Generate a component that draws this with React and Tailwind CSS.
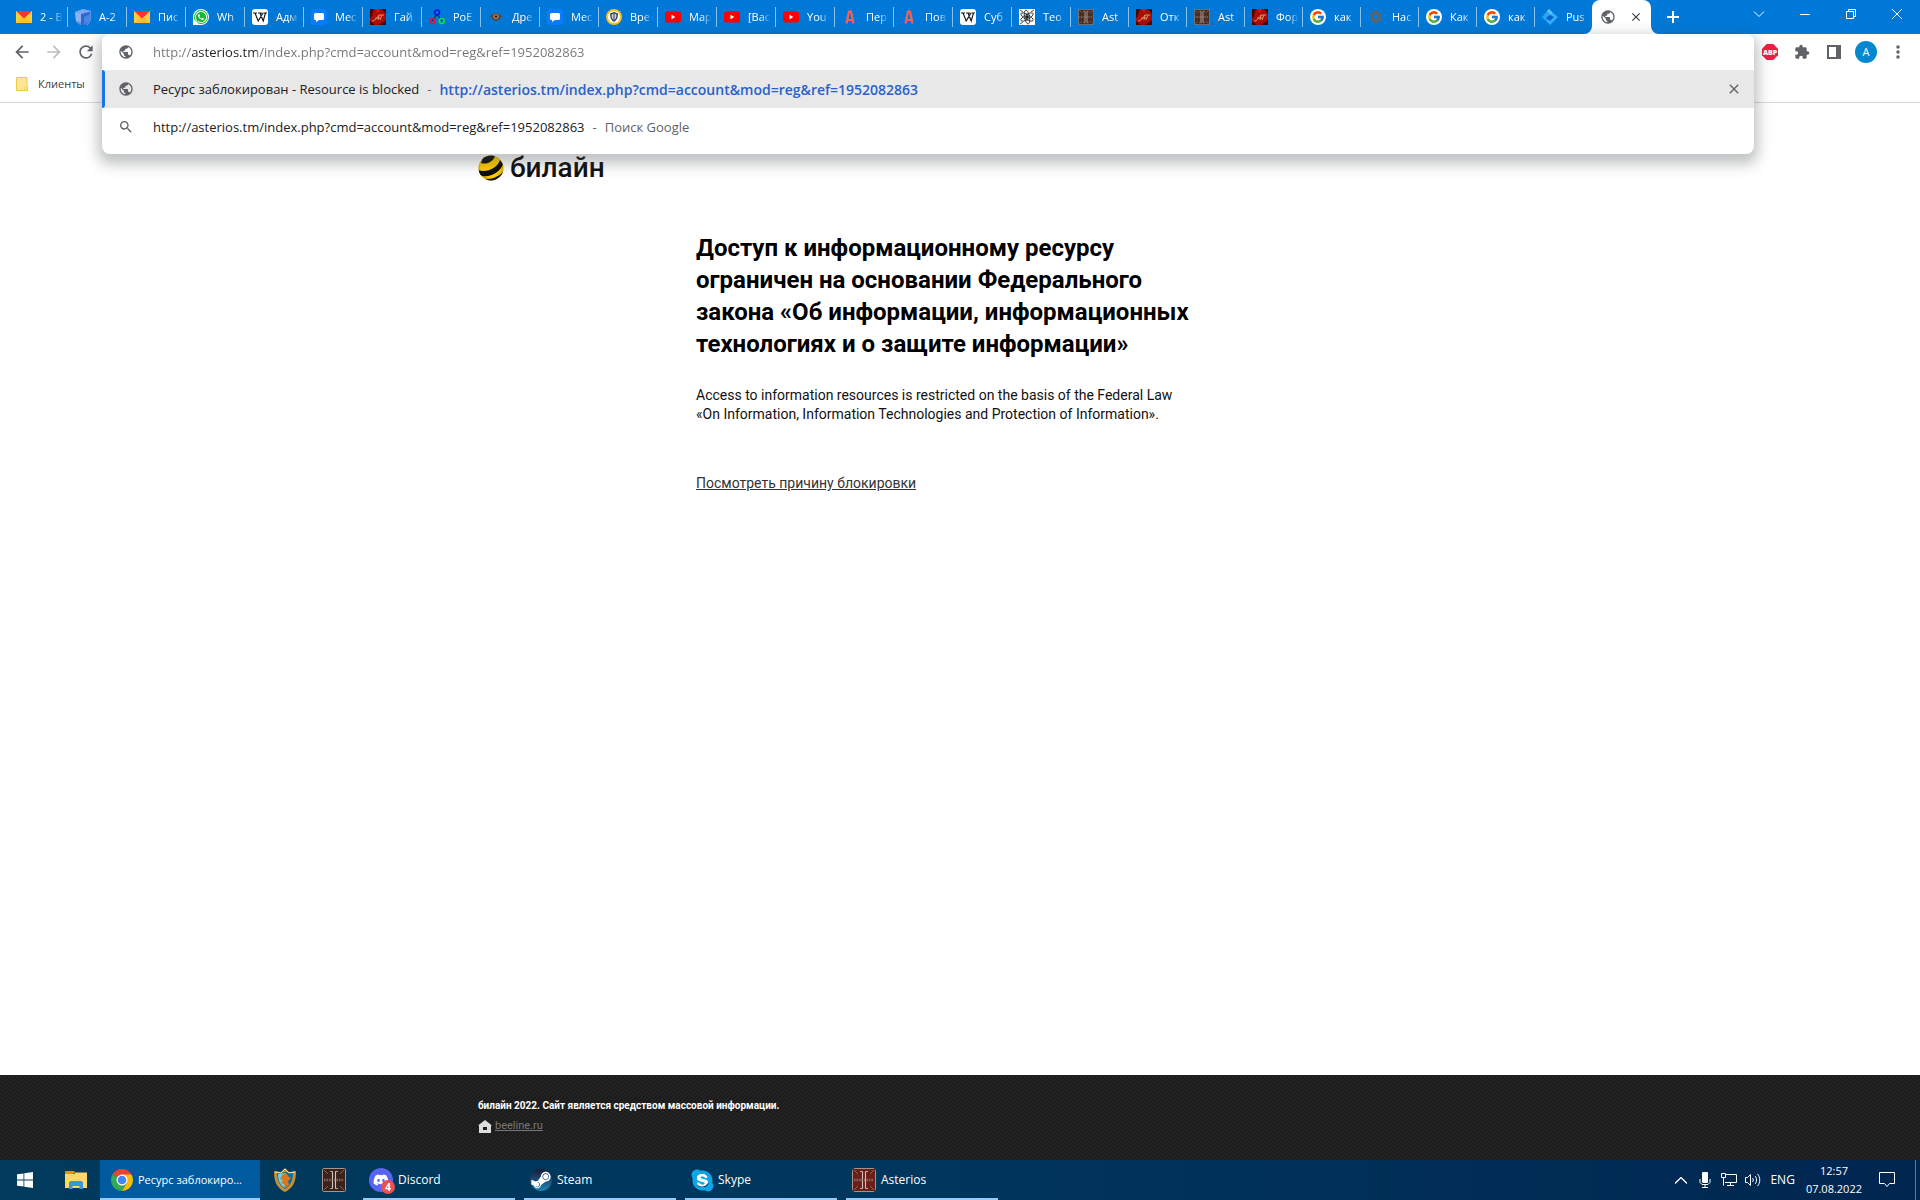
import {
  MdArrowBack,
  MdArrowForward,
  MdClose,
  MdExtension,
  MdMoreVert,
  MdPublic,
  MdRefresh,
  MdSearch,
  MdSettings,
} from 'react-icons/md'
import { FcGoogle } from 'react-icons/fc'
import { FaDiscord, FaSkype, FaSteamSymbol, FaWhatsapp } from 'react-icons/fa'

const URL_TEXT = 'http://asterios.tm/index.php?cmd=account&mod=reg&ref=1952082863'

// ---- favicons, all drawn on a 16px grid ----

function Mail() {
  return (
    <svg viewBox="0 0 16 16" className="size-4">
      <path d="M0 2h16v12H0z" fill="#ffcc3f" />
      <path d="M0 14l6-6h4l6 6z" fill="#ffbe2e" />
      <path d="M0 2h16L8 9.500z" fill="#f33" />
    </svg>
  )
}

function Cube() {
  return (
    <svg viewBox="0 0 16 16" className="size-4">
      <path d="M0 3l8-3 8 2v9l-3 5H5l-4-3z" fill="#5b93ea" />
      <path d="M0 3l6 1v9l-5-1z" fill="#8db4f2" />
      <path d="M6 5l9-2-1 10-3 3H6z" fill="#2f66d0" />
      <path d="M9 8l6-3-1 8-5 3z" fill="#4a84e4" />
      <path d="M0 3l8-3 8 2-10 3z" fill="#79a8f0" />
    </svg>
  )
}

function WhatsApp() {
  return (
    <span className="flex size-4 items-center justify-center rounded-full rounded-bl-sm bg-white">
      <span className="flex size-3.5 items-center justify-center rounded-full bg-[#12b932]">
        <FaWhatsapp className="size-3.5 text-white" />
      </span>
    </span>
  )
}

function Wiki() {
  return (
    <svg viewBox="0 0 16 16" className="size-4">
      <rect width="16" height="16" rx="3" fill="#fff" />
      <path d="M1 4h4M6 4h4M11.500 4H15M3 4l3.200 8L11 4M8 4l3.200 8L13.500 4" stroke="#111" strokeWidth="1.100" fill="none" />
    </svg>
  )
}

function Chat() {
  return (
    <svg viewBox="0 0 16 16" className="size-4">
      <rect width="16" height="16" rx="3" fill="#0a7cff" />
      <path d="M4.500 4h7A1.500 1.500 0 0 1 13 5.500v4a1.500 1.500 0 0 1-1.500 1.500H8l-3 2v-2h-.500A1.500 1.500 0 0 1 3 9.500v-4A1.500 1.500 0 0 1 4.500 4z" fill="#fff" />
    </svg>
  )
}

function RedGame() {
  return (
    <svg viewBox="0 0 16 16" className="size-4">
      <path d="M0 0h16v16H0z" fill="#a80c0c" />
      <path d="M0 0h4L1 9H0zM12 0h4v5zM9 16l7-5v5zM0 12l5 4H0z" fill="#4d0505" />
      <path d="M5 0l3 4 2-4z" fill="#d21a1a" />
      <path d="M2 12c3 0 5-3 7-6h5M9 6l-1 5M5 9h6M12 6l-2 5" stroke="#d9955f" strokeWidth="1" fill="none" />
    </svg>
  )
}

function Rings() {
  return (
    <svg viewBox="0 0 16 16" className="size-4" fill="none" strokeWidth="1.700">
      <path d="M8 5L3 12M8 5l5 7" stroke="#113" strokeWidth="1" />
      <circle cx="8" cy="3.500" r="2.500" stroke="#0b12e8" />
      <circle cx="3.200" cy="12" r="2.500" stroke="#e8103a" />
      <circle cx="12.800" cy="12" r="2.500" stroke="#0be03c" />
    </svg>
  )
}

function Eye() {
  return (
    <svg viewBox="0 0 16 16" className="size-4">
      <path d="M1.500 7.500C4 6 5 4 8 4s4 2 6.500 3.500C12 9 11 12 8 12S4 9 1.500 7.500z" fill="#5b4a3c" />
      <circle cx="8" cy="7.500" r="2.500" fill="#a88768" />
      <circle cx="8" cy="7.500" r="1.200" fill="#1f1a16" />
    </svg>
  )
}

function Guard() {
  return (
    <svg viewBox="0 0 16 16" className="size-4">
      <circle cx="8" cy="8" r="8" fill="#fbc21a" />
      <circle cx="8" cy="8" r="6" fill="#fff" />
      <path d="M8 3l4 1.500c0 4-1 6.500-4 8.500-3-2-4-4.500-4-8.500z" fill="#2e3f5c" />
      <path d="M8 4.500l2.500 1c0 3-.700 4.500-2.500 6-1.800-1.500-2.500-3-2.500-6z" fill="#cfd6e0" />
      <path d="M8 4.500v7" stroke="#2e3f5c" strokeWidth="1" />
    </svg>
  )
}

function YouTube() {
  return (
    <svg viewBox="0 0 16 16" className="size-4">
      <rect y="2.500" width="16" height="11" rx="2.500" fill="#f00" />
      <path d="M6.500 5.800v4.400L10.300 8z" fill="#fff" />
    </svg>
  )
}

function Coral() {
  return (
    <svg viewBox="0 0 16 16" className="size-4">
      <path d="M4.500 14.500L7 2.500h2l2.500 12M5.500 11h5" stroke="#ff5c57" strokeWidth="2.200" fill="none" />
    </svg>
  )
}

function Atom() {
  return (
    <svg viewBox="0 0 16 16" className="size-4" fill="none" stroke="#222" strokeWidth=".800">
      <path d="M0 0h16v16H0z" fill="#fff" stroke="none" />
      <ellipse cx="8" cy="8" rx="7" ry="2.500" transform="rotate(30 8 8)" />
      <ellipse cx="8" cy="8" rx="7" ry="2.500" transform="rotate(-30 8 8)" />
      <ellipse cx="8" cy="8" rx="7" ry="2.500" transform="rotate(80 8 8)" />
      <circle cx="8" cy="8" r="1.500" fill="#222" />
      <path d="M1 1l3 2M15 1l-3 2M1 15l3-2" />
    </svg>
  )
}

function Pillars({ className = 'size-4', fill = '#4a2e24' }) {
  return (
    <svg viewBox="0 0 24 24" className={className}>
      <rect x=".500" y=".500" width="23" height="23" rx="1" fill={fill} stroke="#a5958a" />
      <path d="M2 2l4 4M22 2l-4 4M2 22l4-4M22 22l-4-4" stroke="#8f7a6d" strokeWidth=".800" />
      <path d="M10.500 4v16M13.500 4v16" stroke="#cfc3ba" strokeWidth="1.100" />
      <path d="M8 3.500h3M13 3.500h3M8 20.500h3M13 20.500h3" stroke="#cfc3ba" strokeWidth=".800" />
      <path d="M2 12h20" stroke="#a89488" strokeWidth="2.500" strokeDasharray="1.500 1" opacity=".6" />
    </svg>
  )
}

function Google() {
  return (
    <span className="flex size-4 items-center justify-center rounded-full bg-white">
      <FcGoogle className="size-3.5" />
    </span>
  )
}

function Gear() {
  return <MdSettings className="size-4 text-[#5f6368]" />
}

function Diamonds() {
  return (
    <svg viewBox="0 0 16 16" className="size-4">
      <path d="M0 8l7-8 4 4-7 8z" fill="#2ba6f7" />
      <path d="M7 0l4 4-2 2-4-4z" fill="#5cc3ff" />
      <path d="M8 6l3-2 5 4-8 8-4-4 4-3z" fill="#34b0fb" />
      <path d="M8 6l4 2-4 4-4-3z" fill="#0b62c8" />
    </svg>
  )
}

const tabs = [
  ['2 - В', Mail],
  ['A-2', Cube],
  ['Пис', Mail],
  ['Wh', WhatsApp],
  ['Адм', Wiki],
  ['Мес', Chat],
  ['Гай', RedGame],
  ['PoE', Rings],
  ['Дре', Eye],
  ['Мес', Chat],
  ['Вре', Guard],
  ['Мар', YouTube],
  ['[Вас', YouTube],
  ['You', YouTube],
  ['Пер', Coral],
  ['Пов', Coral],
  ['Суб', Wiki],
  ['Тео', Atom],
  ['Ast', Pillars],
  ['Отк', RedGame],
  ['Ast', Pillars],
  ['Фор', RedGame],
  ['как', Google],
  ['Нас', Gear],
  ['Как', Google],
  ['как', Google],
  ['Pus', Diamonds],
]

function Tab({ title, icon: Icon, wide, first }) {
  return (
    <button className={`flex h-full items-center ${wide ? 'w-[59px]' : 'w-[58px]'}`}>
      <span className={`h-5 w-px ${first ? '' : 'bg-[#8cc2ee]'}`} />
      <span className="flex flex-1 items-center gap-2 pl-[7px]">
        <Icon />
        <span className="w-[23px] overflow-hidden whitespace-nowrap text-left text-[11px] text-white [mask-image:linear-gradient(to_right,black_55%,transparent)]">
          {title}
        </span>
      </span>
    </button>
  )
}

function WindowButton({ label, children }) {
  return (
    <button aria-label={label} className="flex h-7 w-[46px] items-center justify-center">
      <svg viewBox="0 0 10 10" className="size-2.5 overflow-visible" fill="none" stroke="#fff">{children}</svg>
    </button>
  )
}

function TabStrip() {
  return (
    <div className="flex h-[34px] items-stretch bg-[#0078d7] pl-2">
      {tabs.map(([title, icon], i) => (
        <Tab key={i} title={title} icon={icon} wide={i < 18} first={i === 0} />
      ))}
      <div className="relative flex w-[59px] items-center justify-between rounded-t-lg bg-white px-2">
        <MdPublic className="size-4 text-[#5f6368]" />
        <button aria-label="Закрыть вкладку"><MdClose className="size-3.5 text-[#3c4043]" /></button>
        <svg viewBox="0 0 8 8" className="absolute -left-2 bottom-0 size-2"><path d="M8 0v8H0a8 8 0 0 0 8-8z" fill="#fff" /></svg>
        <svg viewBox="0 0 8 8" className="absolute -right-2 bottom-0 size-2"><path d="M0 0v8h8a8 8 0 0 1-8-8z" fill="#fff" /></svg>
      </div>
      <button aria-label="Новая вкладка" className="flex w-11 items-center justify-center">
        <svg viewBox="0 0 12 12" className="size-3"><path d="M6 0v12M0 6h12" stroke="#fff" strokeWidth="2" /></svg>
      </button>
      <div className="ml-auto flex">
        <WindowButton label="Поиск вкладок"><path d="M0 2.500l5 5 5-5" /></WindowButton>
        <WindowButton label="Свернуть"><path d="M0 5.500h10" /></WindowButton>
        <WindowButton label="Восстановить"><path d="M.5 2.500h7v7h-7zM2.500 2.500v-2h7v7h-2" /></WindowButton>
        <WindowButton label="Закрыть"><path d="M0 0l10 10M10 0L0 10" /></WindowButton>
      </div>
    </div>
  )
}

function ToolButton({ label, children }) {
  return (
    <button aria-label={label} className="flex h-9 w-8 items-center justify-center text-[#5f6368]">
      {children}
    </button>
  )
}

// address field with its suggestion list, hangs over the page
function Omnibox() {
  return (
    <div className="absolute inset-x-0 top-0 z-10 overflow-hidden rounded-lg bg-white pb-2 text-[13px] text-[#202124] shadow-[0_6px_14px_4px_rgba(60,64,67,0.32)]">
      <div className="flex h-9 items-center pl-4">
        <MdPublic className="size-4 text-[#5f6368]" />
        <input
          aria-label="Адресная строка"
          defaultValue={URL_TEXT}
          className="ml-[19px] flex-1 bg-[linear-gradient(to_right,#757575_38px,#202124_38px,#202124_104px,#757575_104px)] bg-clip-text pt-0.5 text-transparent outline-none"
        />
      </div>
      <div className="flex h-[38px] items-center bg-[#e8e8e8]">
        <span className="h-full w-[3px] rounded-r-sm bg-[#1a73e8]" />
        <MdPublic className="ml-[13px] size-4 text-[#5f6368]" />
        <a href="#blocked" className="ml-[19px] flex flex-1 items-center whitespace-nowrap pt-0.5">
          Ресурс заблокирован - Resource is blocked
          <span className="mx-2 text-[#5f6368]">-</span>
          <span className="text-sm font-semibold text-[#2962c8]">{URL_TEXT}</span>
        </a>
        <button aria-label="Удалить подсказку" className="pr-3">
          <MdClose className="size-4 text-[#5f6368]" />
        </button>
      </div>
      <div className="flex h-[38px] items-center pl-4">
        <MdSearch className="size-4 text-[#5f6368]" />
        <a href="#search" className="ml-[19px] whitespace-nowrap pt-0.5">
          {URL_TEXT}
          <span className="mx-2 text-[#5f6368]">-</span>
          <span className="text-[#5f6368]">Поиск Google</span>
        </a>
      </div>
    </div>
  )
}

function Toolbar() {
  return (
    <header className="h-[69px] border-b border-[#d6d8db] bg-white">
      <div className="flex px-1.5">
        <ToolButton label="Назад"><MdArrowBack className="size-5" /></ToolButton>
        <ToolButton label="Вперёд"><MdArrowForward className="size-5 text-[#babcbe]" /></ToolButton>
        <ToolButton label="Обновить"><MdRefresh className="size-5" /></ToolButton>
        <div className="relative flex-1"><Omnibox /></div>
        <ToolButton label="Adblock Plus">
          <svg viewBox="0 0 16 16" className="size-4">
            <path d="M4.700 0h6.600L16 4.700v6.600L11.300 16H4.700L0 11.300V4.700z" fill="#ed1e45" />
            <text x="8" y="10.500" textAnchor="middle" fontSize="7" fontWeight="800" fill="#fff">ABP</text>
          </svg>
        </ToolButton>
        <ToolButton label="Расширения"><MdExtension className="size-4" /></ToolButton>
        <ToolButton label="Боковая панель">
          <svg viewBox="0 0 14 14" className="size-3.5"><path d="M0 0h14v14H0zM2 2v10h7V2z" fillRule="evenodd" fill="#5f6368" /></svg>
        </ToolButton>
        <ToolButton label="Профиль">
          <span className="flex size-[22px] items-center justify-center rounded-full bg-[#0288d1] text-[11px] text-white">А</span>
        </ToolButton>
        <ToolButton label="Меню"><MdMoreVert className="size-5" /></ToolButton>
      </div>
      <a href="#clients" className="flex h-7 w-24 items-center gap-2.5 pl-4 text-[11px] text-[#3c4043]">
        <svg viewBox="0 0 12 14" className="h-3.5 w-3">
          <path d="M.5.5h10.500v9h.500v4H.5z" fill="#ffe694" stroke="#ecc94b" />
          <path d="M9 10v3.500" stroke="#ecc94b" />
        </svg>
        Клиенты
      </a>
    </header>
  )
}

function BeelineLogo() {
  return (
    <div className="flex h-[26px] items-center gap-1.5">
      <svg viewBox="0 0 26 26" className="size-[26px]">
        <defs>
          <clipPath id="ball"><circle cx="13" cy="13" r="12.500" /></clipPath>
          <radialGradient id="shade" cx=".5" cy=".45" r=".55">
            <stop offset=".7" stopColor="#000" stopOpacity="0" />
            <stop offset="1" stopColor="#000" stopOpacity=".3" />
          </radialGradient>
        </defs>
        <g clipPath="url(#ball)">
          <path d="M0 0h26v26H0z" fill="#fc0" />
          <path d="M3 8c5 2 12-1 14-7L13-1 5 2z" fill="#111" />
          <path d="M0 15c8 3 19-1 22-10l3 4c-2 8-15 15-23 11z" fill="#0a0a0a" />
          <path d="M6 24c8 1 17-3 20-9v4c-4 5-10 8-17 7z" fill="#151515" />
          <path d="M0 0h26v26H0z" fill="url(#shade)" />
        </g>
      </svg>
      <span className="text-[28px] font-medium leading-[26px] text-[#111]">билайн</span>
    </div>
  )
}

function Page() {
  return (
    <main className="flex-1 bg-white font-[Roboto,sans-serif]">
      <div className="mx-auto w-full max-w-[964px] pt-[52px]">
        <BeelineLogo />
        <div className="ml-[218px] mt-[51px] max-w-[510px]">
          <h1 className="text-2xl font-bold leading-8 text-black">
            Доступ к информационному ресурсу<br />
            ограничен на основании Федерального<br />
            закона «Об информации, информационных<br />
            технологиях и о защите информации»
          </h1>
          <p className="mt-[26px] text-sm leading-[19px] text-[#111]">
            Access to information resources is restricted on the basis of the Federal Law<br />
            «On Information, Information Technologies and Protection of Information».
          </p>
          <a href="#reason" className="mt-[49px] inline-block text-sm leading-5 text-[#333] underline">
            Посмотреть причину блокировки
          </a>
        </div>
      </div>
    </main>
  )
}

function Footer() {
  return (
    <footer className="bg-[#242424] bg-[linear-gradient(135deg,#1a1a1a_25%,transparent_25%,transparent_50%,#1a1a1a_50%,#1a1a1a_75%,transparent_75%)] bg-[length:4px_4px] pb-[25px] pt-[23px] font-[Roboto,sans-serif] text-[10px]">
      <div className="mx-auto flex max-w-[964px] flex-col gap-1">
        <p className="font-bold leading-4 text-white">билайн 2022. Сайт является средством массовой информации.</p>
        <a href="#beeline" className="flex h-[17px] items-center gap-[3px] text-[11px] text-[#777]">
          <svg viewBox="0 0 14 13" className="h-[13px] w-3.5">
            <path d="M7 0l7 5.500h-1V13H1V5.500H0zM5 7v3h4V7z" fillRule="evenodd" fill="#ddd" />
          </svg>
          <span className="underline">beeline.ru</span>
        </a>
      </div>
    </footer>
  )
}

function TaskIcon({ label, children }) {
  return <button aria-label={label} className="flex w-[49px] items-center justify-center">{children}</button>
}

function TaskButton({ label, active, children }) {
  return (
    <button
      className={`flex items-center gap-[5px] border-b-2 border-[#99c9f7] pt-0.5 text-white ${
        active ? 'w-40 bg-[#005a9e] pl-[11px] text-[11px]' : 'mr-[9px] w-[152px] pl-1.5 text-xs'
      }`}
    >
      {children}
      <span className="whitespace-nowrap">{label}</span>
    </button>
  )
}

function Taskbar() {
  return (
    <nav className="flex h-10 items-stretch bg-linear-to-r from-[#003a5d] via-[#00365c] to-[#002650]">
      <TaskIcon label="Пуск">
        <svg viewBox="0 0 16 16" className="size-4" fill="#fff">
          <path d="M0 2.300l6.500-.900v6.100H0zM7.300 1.300L16 0v7.500H7.300zM0 8.400h6.500v6.200L0 13.700zM7.300 8.400H16V16l-8.700-1.300z" />
        </svg>
      </TaskIcon>
      <div className="flex w-[51px] pl-0.5">
        <TaskIcon label="Проводник">
          <svg viewBox="0 0 22 18" className="h-[18px] w-[22px]">
            <path d="M0 0h9l2 2h-2l-2 2H0z" fill="#d99a0b" />
            <path d="M0 3h9l2-1.500h11V17H0z" fill="#ffd869" />
            <path d="M4 18v-6a2 2 0 0 1 2-2h10a2 2 0 0 1 2 2v6h-3.500v-3h-7v3z" fill="#3a94e0" />
          </svg>
        </TaskIcon>
      </div>
      <TaskButton label="Ресурс заблокиро..." active>
        <svg viewBox="0 0 22 22" className="size-[22px]">
          <path d="M11 11L1.500 5.500A11 11 0 0 1 20.500 5.500z" fill="#ea4335" />
          <path d="M11 11L1.500 5.500A11 11 0 0 0 11 22l4.500-8.500z" fill="#34a853" />
          <path d="M11 5.500h9.500A11 11 0 0 1 11 22l4.800-8.300z" fill="#fbbc05" />
          <circle cx="11" cy="11" r="5.500" fill="#fff" />
          <circle cx="11" cy="11" r="4.300" fill="#4285f4" />
        </svg>
      </TaskButton>
      <TaskIcon label="Щит">
        <svg viewBox="0 0 22 24" className="h-6 w-[22px]">
          <path d="M0 3l7 1 4-4 4 4 7-1c0 11-3 17-11 21C3 20 0 14 0 3z" fill="#c98f35" />
          <path d="M3 5l8-1 8 1c0 8-3 13-8 16-5-3-8-8-8-16z" fill="#0f6f96" />
          <path d="M4 6l7-1v15c-5-3-7-7-7-14z" fill="#6fd0e0" />
          <path d="M8 7l4-2 3 4 2 1-3 3 1 4-4 3-1-4-3-1 2-3-3-1z" fill="#d9771f" />
          <path d="M1 4l6 1 4-4 4 4 6-1" stroke="#ffe9a8" fill="none" />
        </svg>
      </TaskIcon>
      <TaskIcon label="Lineage II"><Pillars className="size-6" fill="#3b231b" /></TaskIcon>
      <div className="ml-[5px] flex">
        <TaskButton label="Discord">
          <span className="relative flex size-6 items-center justify-center rounded-full bg-[#5865f2]">
            <FaDiscord className="size-4 text-white" />
            <span className="absolute -bottom-0.5 -right-0.5 flex size-3.5 items-center justify-center rounded-full bg-[#ed4e50] text-[10px] font-bold leading-none">4</span>
          </span>
        </TaskButton>
        <TaskButton label="Steam">
          <span className="flex size-[22px] items-center justify-center overflow-hidden rounded-full bg-linear-to-b from-[#171a3a] to-[#1387b8]">
            <FaSteamSymbol className="size-[22px] text-white" />
          </span>
        </TaskButton>
        <TaskButton label="Skype">
          <span className="flex size-[22px] items-center justify-center bg-[radial-gradient(circle,white_6px,transparent_7px)]">
            <FaSkype className="size-[25px] shrink-0 text-[#0ea5e9]" />
          </span>
        </TaskButton>
        <TaskButton label="Asterios"><Pillars className="size-6 rounded-sm" fill="#6b1f1a" /></TaskButton>
      </div>
      <div className="ml-auto flex items-center text-[11px] text-white">
        <button aria-label="Скрытые значки" className="flex w-6 justify-center">
          <svg viewBox="0 0 12 7" className="h-[7px] w-3" fill="none" stroke="#fff" strokeWidth="1.300"><path d="M0 6.500l6-6 6 6" /></svg>
        </button>
        <button aria-label="Микрофон" className="flex w-6 justify-center">
          <svg viewBox="0 0 12 16" className="h-4 w-3" fill="none" stroke="#fff">
            <rect x="3" y="0" width="6" height="11" rx="1" fill="#fff" stroke="none" />
            <path d="M1 7v3.500l2 2h6l2-2V7M6 12.500v3M3 15.500h6" />
          </svg>
        </button>
        <button aria-label="Сеть" className="flex w-6 justify-center">
          <svg viewBox="0 0 16 14" className="h-3.5 w-4" fill="none" stroke="#fff">
            <path d="M5 1.500h10.500v8H4M.5.500h4v4h-4zM2.500 4.500v8M9.500 9.500v3M6 12.500h7" />
          </svg>
        </button>
        <button aria-label="Громкость" className="flex w-6 justify-center">
          <svg viewBox="0 0 16 14" className="h-3.5 w-4" fill="none" stroke="#fff">
            <path d="M.5 4.500h2l3-3v11l-3-3h-2zM7.500 5c1 1 1 3 0 4M10 3c2 2 2 6 0 8M12.500 1c3 3 3 9 0 12" />
          </svg>
        </button>
        <span className="ml-[5px] text-xs">ENG</span>
        <div className="ml-[11px] flex flex-col text-center leading-[18px]">
          <span>12:57</span>
          <span>07.08.2022</span>
        </div>
        <button aria-label="Уведомления" className="ml-[17px] mr-5">
          <svg viewBox="0 0 16 16" className="size-4" fill="none" stroke="#fff"><path d="M.5.500h15v11h-5L8 14.500l-2.500-3h-5z" /></svg>
        </button>
        <span className="mr-1 h-10 w-px bg-[#5f7d98]" />
      </div>
    </nav>
  )
}

export default function App() {
  return (
    <div className="flex min-h-screen flex-col font-['Open_Sans','Noto_Sans',sans-serif]">
      <TabStrip />
      <Toolbar />
      <Page />
      <Footer />
      <Taskbar />
    </div>
  )
}
